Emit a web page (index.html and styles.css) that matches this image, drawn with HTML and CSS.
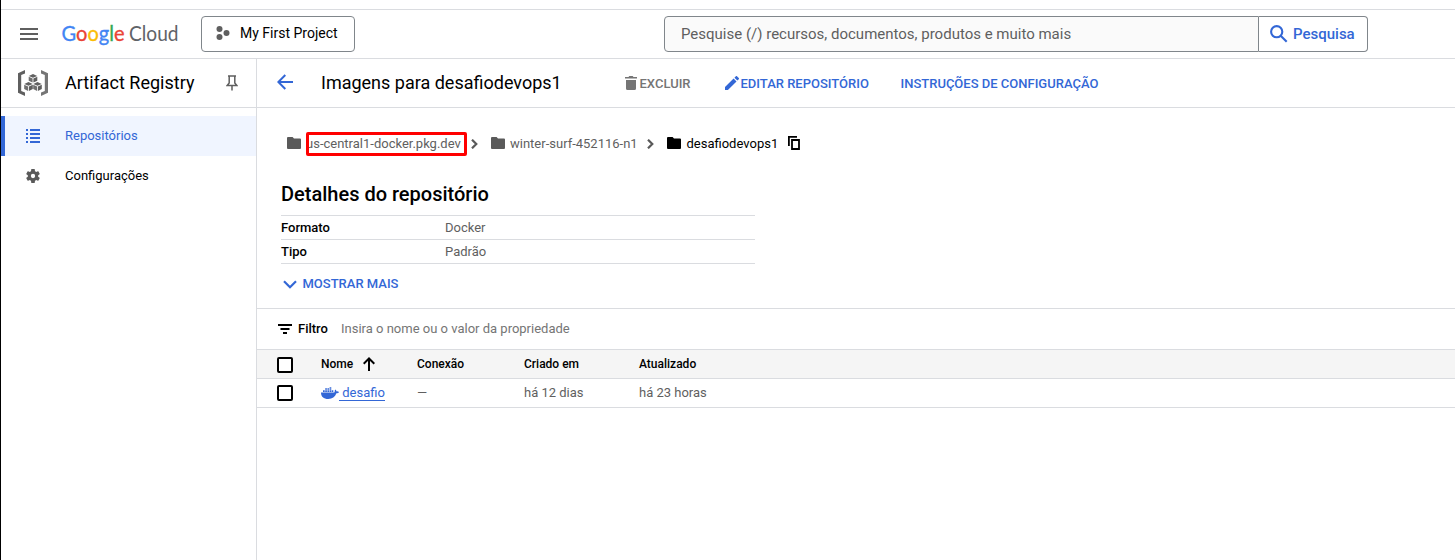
FILE: index.html
```html
<!DOCTYPE html>
<html lang="pt-BR">
<head>
<meta charset="utf-8">
<title>Artifact Registry – Google Cloud</title>
<link rel="stylesheet" href="styles.css">
</head>
<body>
<div class="page">
  <header class="topbar">
    <svg class="menu" viewBox="0 0 18 12"><path d="M0 0h18v2H0zM0 5h18v2H0zM0 10h18v2H0z"/></svg>
    <svg class="brand" viewBox="0 0 118 28"><text class="brand-google" x="-0.500" y="20.500" textLength="63" lengthAdjust="spacingAndGlyphs"><tspan class="g-blue">G</tspan><tspan class="g-red">o</tspan><tspan class="g-yellow">o</tspan><tspan class="g-blue">g</tspan><tspan class="g-green">l</tspan><tspan class="g-red">e</tspan></text><text class="brand-cloud" x="67" y="20.500" textLength="49.500" lengthAdjust="spacingAndGlyphs">Cloud</text></svg>
    <button class="project">
      <svg class="project-icon" viewBox="0 0 14 14"><circle cx="3.500" cy="3" r="3"/><circle cx="3.500" cy="11" r="3"/><circle cx="10.500" cy="7" r="3"/></svg>
      <span>My First Project</span>
    </button>
    <div class="search">
      <div class="search-input">Pesquise (/) recursos, documentos, produtos e muito mais</div>
      <button class="search-button">
        <svg class="search-icon" viewBox="0 0 18 18"><circle cx="6.7" cy="6.7" r="5.6"/><path d="M10.7 10.7l6 6"/></svg>
        <span>Pesquisa</span>
      </button>
    </div>
  </header>

  <div class="shell">
    <aside class="sidebar">
      <div class="product">
        <svg class="product-icon" viewBox="0 0 30 26">
          <path class="bracket-l" d="M7 0v3.400L3.200 5v16L7 22.600V26l-7-3.200V3.200z"/>
          <path class="bracket-r" d="M23 0v3.400L26.800 5v16L23 22.600V26l7-3.200V3.200z"/>
          <g>
            <path class="cube-top" d="M15 4l4.200 1.900L15 7.800l-4.200-1.900zM10.500 12l4.200 1.900-4.200 1.900-4.200-1.900zM19.500 12l4.200 1.900-4.200 1.900-4.200-1.900z"/>
            <path class="cube-left" d="M10.700 6.700l3.900 1.700v4.100l-3.900-1.800zM6.200 14.700l3.900 1.700v4.600l-3.900-2zM15.200 14.700l3.900 1.700v4.600l-3.900-2z"/>
            <path class="cube-right" d="M19.300 6.700l-3.900 1.700v4.100l3.900-1.800zM14.800 14.700l-3.900 1.700v4.600l3.900-2zM23.800 14.700l-3.900 1.700v4.600l3.900-2z"/>
          </g>
        </svg>
        <span class="product-name">Artifact Registry</span>
        <svg class="pin" viewBox="0 0 12 16"><path d="M2 1h8M3.200 1v7L1.200 10.500h9.600L8.800 8V1M6 10.500V15.500"/></svg>
      </div>
      <nav class="nav">
        <a class="nav-item nav-item-active">
          <svg class="nav-icon" viewBox="0 0 14 14"><path d="M0 0h2v2H0zM4 0h10v2H4zM0 4h2v2H0zM4 4h10v2H4zM0 8h2v2H0zM4 8h10v2H4zM0 12h2v2H0zM4 12h10v2H4z"/></svg>
          <span>Repositórios</span>
        </a>
        <a class="nav-item">
          <svg class="nav-icon" viewBox="2.300 2.300 19.400 19.400"><path d="M19.140 12.940c.04-.3.060-.610.060-.940s-.02-.640-.07-.940l2.030-1.580c.18-.14.230-.410.120-.610l-1.920-3.320c-.12-.22-.37-.29-.59-.22l-2.390.96c-.5-.38-1.030-.7-1.620-.94l-.36-2.540c-.04-.24-.24-.41-.48-.41h-3.840c-.24 0-.43.170-.47.410l-.36 2.540c-.59.240-1.130.570-1.620.940l-2.390-.96c-.22-.08-.47 0-.59.220L2.740 8.870c-.12.210-.08.470.120.610l2.030 1.580c-.05.300-.09.630-.09.940s.02.640.070.940l-2.030 1.580c-.18.140-.23.410-.12.610l1.920 3.320c.12.220.370.290.590.220l2.390-.96c.5.380 1.030.7 1.620.940l.36 2.540c.05.240.240.410.480.410h3.840c.24 0 .44-.17.470-.41l.36-2.540c.59-.24 1.130-.56 1.620-.94l2.390.96c.22.080.470 0 .590-.22l1.920-3.320c.12-.22.070-.47-.12-.61zM12 15A3 3 0 1 1 12 9a3 3 0 0 1 0 6z"/></svg>
          <span>Configurações</span>
        </a>
      </nav>
    </aside>

    <main class="main">
      <div class="actionbar">
        <svg class="back" viewBox="0 0 16 16"><path d="M16 8H1.500M8.300 1L1.300 8l7 7"/></svg>
        <h1 class="title">Imagens para desafiodevops1</h1>
        <button class="action action-disabled action-delete"><svg class="trash" viewBox="0 0 12 14"><path d="M1 4h10v8.500a1.500 1.500 0 0 1-1.500 1.500h-7A1.500 1.500 0 0 1 1 12.500zM0 1h3.500l.8-1h3.400l.8 1H12v1.600H0z"/></svg><span>EXCLUIR</span></button>
        <button class="action action-edit"><svg class="pencil" viewBox="3 3 18 18"><path d="M3 17.250V21h3.750L17.810 9.940l-3.750-3.750zM20.710 7.040a1 1 0 0 0 0-1.410l-2.340-2.340a1 1 0 0 0-1.410 0l-1.830 1.830 3.750 3.750z"/></svg><span>EDITAR REPOSITÓRIO</span></button>
        <button class="action action-setup"><span>INSTRUÇÕES DE CONFIGURAÇÃO</span></button>
      </div>

      <div class="crumbs">
        <svg class="folder" viewBox="0 0 14 12"><path d="M1 0H5.600L7 1.500h6A1 1 0 0 1 14 2.500V11a1 1 0 0 1-1 1H1A1 1 0 0 1 0 11V1A1 1 0 0 1 1 0z"/></svg>
        <span class="crumb crumb-host">us-central1-docker.pkg.dev</span>
        <svg class="chevron" viewBox="0 0 7 10"><path d="M1 .7L5.300 5 1 9.300"/></svg>
        <svg class="folder" viewBox="0 0 14 12"><path d="M1 0H5.600L7 1.500h6A1 1 0 0 1 14 2.500V11a1 1 0 0 1-1 1H1A1 1 0 0 1 0 11V1A1 1 0 0 1 1 0z"/></svg>
        <span class="crumb crumb-project">winter-surf-452116-n1</span>
        <svg class="chevron" viewBox="0 0 7 10"><path d="M1 .7L5.300 5 1 9.300"/></svg>
        <svg class="folder folder-current" viewBox="0 0 14 12"><path d="M1 0H5.600L7 1.500h6A1 1 0 0 1 14 2.500V11a1 1 0 0 1-1 1H1A1 1 0 0 1 0 11V1A1 1 0 0 1 1 0z"/></svg>
        <span class="crumb crumb-current">desafiodevops1</span>
        <svg class="copy" viewBox="0 0 12 14"><path d="M.9 10V.9H9M4 4h7v9H4z"/></svg>
      </div>

      <section class="details">
        <h2 class="details-title">Detalhes do repositório</h2>
        <dl class="facts">
          <div class="fact"><dt>Formato</dt><dd>Docker</dd></div>
          <div class="fact"><dt>Tipo</dt><dd>Padrão</dd></div>
        </dl>
        <button class="more"><svg class="more-icon" viewBox="0 0 14 9"><path d="M1 1.200l6 6 6-6"/></svg><span>MOSTRAR MAIS</span></button>
      </section>

      <div class="filter">
        <svg class="filter-icon" viewBox="0 0 14 10"><path d="M0 0h14v2H0zM2.500 4h9v2h-9zM5 8h4v2H5z"/></svg>
        <span class="filter-label">Filtro</span>
        <span class="filter-hint">Insira o nome ou o valor da propriedade</span>
      </div>

      <div class="table">
        <div class="row row-head">
          <span class="checkbox"></span>
          <span class="cell-name">Nome<svg class="sort" viewBox="0 0 12 14"><path d="M6 14V1.500M.7 6.800L6 1.500l5.300 5.300"/></svg></span>
          <span>Conexão</span>
          <span>Criado em</span>
          <span>Atualizado</span>
        </div>
        <div class="row">
          <span class="checkbox"></span>
          <span class="cell-name"><svg class="docker" viewBox="0 0 18 12"><path d="M0 5.500h12.500c1-.1 1.300-.5 1.200-1.300-.1-.7.200-1.300.7-1.700.7.500 1 1.200 1 1.900.9-.2 1.900 0 2.600.5-.5 1-1.400 1.400-2.600 1.400C14 10 11.300 12 7.300 12 2.600 12 0 9.800 0 5.500zM2 3.200h1.700V5H2zM4.200 3.200h1.700V5H4.200zM6.400 3.200h1.700V5H6.400zM8.600 3.200h1.700V5H8.600zM10.800 3.200h1.500V5h-1.500zM4.200 1.200h1.700v1.500H4.200zM6.400 1.200h1.700v1.500H6.400zM8.600 1.200h1.700v1.500H8.600zM8.600 0h1.700v.8H8.600z"/></svg><a class="image-link">&nbsp;desafio</a></span>
          <span>—</span>
          <span>há 12 dias</span>
          <span>há 23 horas</span>
        </div>
      </div>
    </main>
  </div>
</div>
</body>
</html>
```
FILE: styles.css
```css
* { box-sizing: border-box; }
body {
  margin: 0;
  background: #fff;
  color: #000;
  font: 13px/20px Roboto, "Liberation Sans", sans-serif;
}
button {
  margin: 0;
  padding: 0;
  border: 0;
  background: none;
  color: inherit;
  font: inherit;
}
svg { display: block; flex: none; }
span, a, h1 { white-space: nowrap; }

.page {
  display: flex;
  flex-direction: column;
  width: 1455px;
  height: 560px;
  padding-top: 9px;
  border-left: 1px solid #000;
  overflow: hidden;
}

.topbar {
  display: flex;
  align-items: center;
  height: 50px;
  flex: none;
  padding-left: 19px;
  border-top: 1px solid #dadce0;
  border-bottom: 1px solid #dadce0;
}
.menu { width: 18px; height: 12px; fill: #5f5f5f; }
.brand { width: 118px; height: 28px; margin-left: 24px; overflow: visible; }
.brand-google, .brand-cloud { font-family: Lato, sans-serif; font-size: 21.5px; }
.brand-google { stroke-width: .35px; }
.brand-cloud { fill: #5f6368; }
.g-blue { fill: #4285f4; stroke: #4285f4; }
.g-red { fill: #ea4335; stroke: #ea4335; }
.g-yellow { fill: #fbbc04; stroke: #fbbc04; }
.g-green { fill: #34a853; stroke: #34a853; }
.project {
  display: flex;
  align-items: center;
  width: 154px;
  height: 36px;
  margin-left: 21px;
  padding: 0 0 2px 14px;
  border: 1px solid #80868b;
  border-radius: 4px;
  font-size: 14px;
}
.project-icon { width: 14px; height: 14px; margin-right: 10px; fill: #5f5f5f; }

.search { display: flex; width: 704px; height: 36px; margin-left: 309px; }
.search-input {
  width: 595px;
  padding: 7px 16px;
  border: 1px solid #80868b;
  border-radius: 4px 0 0 4px;
  background: #fafafa;
  color: #5f5f5f;
  font-size: 15px;
}
.search-button {
  display: flex;
  align-items: center;
  width: 109px;
  padding-left: 11px;
  border: 1px solid #80868b;
  border-left: 0;
  border-radius: 0 4px 4px 0;
  color: #3367d6;
  font-size: 15px;
  font-weight: 500;
}
.search-icon { width: 18px; height: 18px; margin-right: 5px; fill: none; stroke: #3367d6; stroke-width: 2.1; }

.shell { display: flex; flex: 1; }
.sidebar { width: 256px; flex: none; border-right: 1px solid #dadce0; }
.product {
  display: flex;
  align-items: center;
  height: 49px;
  padding-left: 17px;
  border-bottom: 1px solid #dadce0;
}
.product-icon { width: 30px; height: 26px; }
.bracket-l, .cube-right { fill: #5f5f5f; }
.bracket-r { fill: #757575; }
.cube-top { fill: #616161; }
.cube-left { fill: #6f6f6f; }
.product-name { width: 161px; margin-left: 17px; font-size: 18px; }
.pin { width: 12px; height: 16px; fill: none; stroke: #5f5f5f; stroke-width: 1.5; }

.nav { padding-top: 8px; }
.nav-item {
  display: flex;
  align-items: center;
  height: 40px;
  padding-left: 25px;
}
.nav-item-active {
  padding-left: 21px;
  border-left: 4px solid #3367d6;
  background: #f0f5ff;
  color: #3367d6;
}
.nav-icon { width: 14px; height: 14px; margin-right: 25px; fill: #5a5a5a; }
.nav-item-active .nav-icon { fill: #3367d6; }

.main { flex: 1; min-width: 0; }
.actionbar {
  display: flex;
  align-items: center;
  height: 49px;
  padding-left: 20px;
  border-bottom: 1px solid #dadce0;
}
.back { width: 16px; height: 16px; margin-bottom: 2px; fill: none; stroke: #3367d6; stroke-width: 2; }
.title { width: 304px; margin: 0 0 0 28px; font-size: 18px; font-weight: 400; }
.action { display: flex; align-items: center; color: #3367d6; font-weight: 500; }
.action span { padding-top: 1px; }
.action-disabled { color: #757575; }
.action-delete { width: 100px; }
.action-edit { width: 175.5px; }
.trash { width: 12px; height: 14px; margin-right: 2.5px; fill: #757575; }
.pencil { width: 14px; height: 14px; margin-right: 1.5px; fill: #3367d6; }

.crumbs {
  display: flex;
  align-items: center;
  height: 24px;
  margin-top: 24px;
  padding-left: 30px;
  color: #5f5f5f;
}
.folder { width: 14px; height: 12px; margin-bottom: 2px; fill: #5a5a5a; }
.folder-current { fill: #000; }
.crumb-host {
  width: 161px;
  height: 24px;
  margin: 0 4px 0 5px;
  border: 3px solid #f00;
  border-radius: 2px;
  line-height: 18px;
  text-indent: -3px;
  overflow: hidden;
}
.chevron { width: 7px; height: 10px; margin-right: 13px; fill: none; stroke: #5a5a5a; stroke-width: 2.2; }
.crumb-project { width: 142px; padding-left: 5px; }
.crumb-current { width: 107px; padding-left: 5.5px; color: #000; }
.copy { width: 12px; height: 14px; margin-bottom: 2px; fill: none; stroke: #000; stroke-width: 1.8; }

.details {
  height: 153px;
  padding: 27px 0 0 24px;
  border-bottom: 1px solid #dadce0;
}
.details-title { margin: 0; font-size: 20px; line-height: 22px; font-weight: 500; }
.facts { width: 474px; margin: 10px 0 0; border-top: 1px solid #dadce0; }
.fact { display: flex; height: 24px; line-height: 23px; border-bottom: 1px solid #dadce0; }
.fact dt { width: 164px; font-weight: 500; }
.fact dd { margin: 0; color: #5f5f5f; }
.more { display: flex; align-items: center; margin: 10px 0 0 2px; color: #3367d6; font-weight: 500; }
.more-icon { width: 14px; height: 9px; margin-right: 5.5px; fill: none; stroke: #3367d6; stroke-width: 2.2; }

.filter { display: flex; align-items: center; height: 40px; padding-left: 21px; }
.filter-icon { width: 14px; height: 10px; }
.filter-label { width: 43px; margin-left: 6px; font-weight: 500; }
.filter-hint { color: #757575; }

.table { border-top: 1px solid #dadce0; }
.row {
  display: grid;
  grid-template-columns: 44px 96px 107px 115px 1fr;
  align-items: center;
  height: 29px;
  padding-left: 20px;
  border-bottom: 1px solid #dadce0;
  color: #5f5f5f;
}
.row-head { background: #f5f5f5; color: #000; font-size: 12px; font-weight: 500; }
.checkbox { width: 16px; height: 16px; border: 2px solid #000; border-radius: 2px; background: #fff; }
.row-head .checkbox { margin-top: 2px; }
.cell-name { display: flex; align-items: center; }
.sort { width: 12px; height: 14px; margin-left: 10px; fill: none; stroke: #000; stroke-width: 2; }
.docker { width: 18px; height: 12px; fill: #3367d6; }
.image-link { height: 16px; line-height: 15px; border-bottom: 1px solid #3367d6; color: #3367d6; }
```
